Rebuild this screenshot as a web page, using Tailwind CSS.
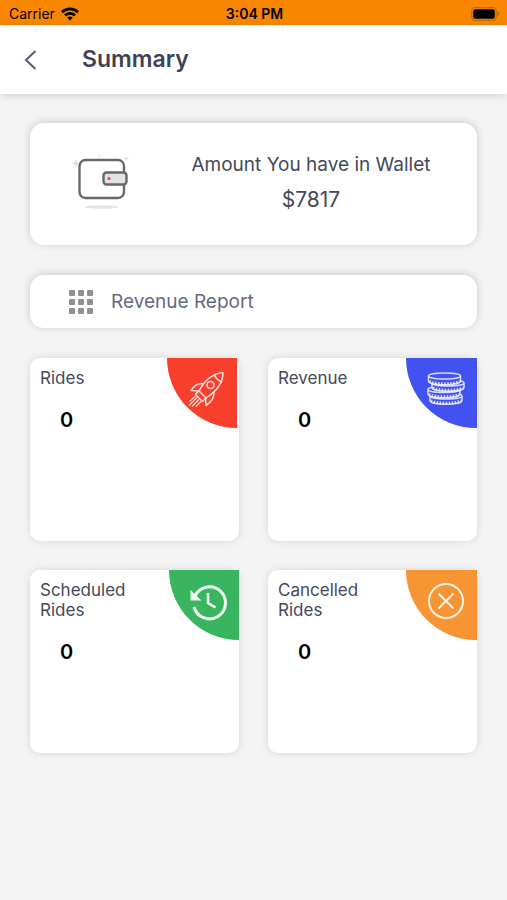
<!DOCTYPE html>
<html lang="en">
<head>
    <meta charset="UTF-8">
    <meta name="viewport" content="width=device-width, initial-scale=1">
    <title>Summary</title>
    <script src="https://cdn.jsdelivr.net/npm/@tailwindcss/browser@4"></script>
</head>
<body class="bg-[#f4f4f4] min-h-screen font-['Inter','Liberation_Sans',sans-serif] text-[#454958]">

    <!-- Status bar -->
    <div class="grid grid-cols-3 items-center h-[25px] pl-[9px] pr-[7px] pt-[2px] bg-[#f98600] text-black">
      <div class="flex items-center gap-[6px] text-[14px]">
        <span>Carrier</span>
        <svg class="w-[18px] h-[14px]" viewBox="0 0 18 14" fill="none" stroke="#000" stroke-width="2.6">
          <path d="M1 5.2a11.4 11.4 0 0 1 16 0"/>
          <path d="M4 8.4a7.2 7.2 0 0 1 10 0"/>
          <path d="M9 13.6L6.2 10.8a4 4 0 0 1 5.6 0z" fill="#000" stroke="none"/>
        </svg>
      </div>
      <p class="text-center text-[14px] font-semibold">3:04 PM</p>
      <svg class="justify-self-end w-[29px] h-[14px]" viewBox="0 0 29 14">
        <rect x=".7" y=".7" width="24.6" height="12.6" rx="3.6" fill="none" stroke="#c56a00" stroke-width="1.2"/>
        <rect x="2.2" y="2.2" width="21.6" height="9.6" rx="2" fill="#000"/>
        <path d="M26.4 4.6c2.6 1 2.6 3.8 0 4.8z" fill="#c56a00"/>
      </svg>
    </div>

    <header class="flex items-center h-[69px] pl-[18px] bg-white shadow-[0_2px_8px_rgba(0,0,0,0.13)]">
      <button type="button" aria-label="Back" class="w-[26px] h-[26px] mr-[38px]">
        <svg class="w-[26px] h-[26px]" viewBox="0 0 26 26" fill="none" stroke="#5a5b78" stroke-width="2">
          <path d="M17.500 4L8 13l9.500 9"/>
        </svg>
      </button>
      <h1 class="text-[23px] font-semibold text-[#3f4254]">Summary</h1>
    </header>

    <main class="px-[30px] pt-[29px] pb-8">

      <section class="flex h-[122px] mb-[30px] bg-white rounded-[14px] shadow-[0_-1px_9px_rgba(0,0,0,0.18)]">
        <div class="w-1/3 pt-[30px] pl-[42px]">
          <svg class="w-[58px] h-[58px]" viewBox="0 0 58 58" fill="none">
            <path d="M4 6l1.200 3.300 3.300 1.200-3.300 1.200-1.200 3.300-1.200-3.300-2.800-1.200 2.800-1.200z" fill="#dedede"/>
            <circle cx="27.500" cy="2.500" r="1" fill="#dcdcdc"/>
            <path d="M54.500 3l.8 1.800 1.800.8-1.800.8-.8 1.800-.8-1.800-1.800-.8 1.800-.8z" fill="#dedede"/>
            <ellipse cx="29.500" cy="54" rx="17" ry="1.800" fill="#e4e4e4"/>
            <rect x="7.500" y="7" width="44.500" height="38" rx="6" stroke="#686868" stroke-width="2.400"/>
            <rect x="31.500" y="19.500" width="23" height="12" rx="3" fill="#e2e2e2" stroke="#686868" stroke-width="2.400"/>
            <circle cx="37" cy="25.500" r="1.600" fill="#d4476e"/>
          </svg>
        </div>
        <div class="flex-1 pt-[29px] pr-[34px] text-center">
          <p class="text-[19px] leading-[26px]">Amount You have in Wallet</p>
          <p class="mt-[8px] text-[21px] leading-[28px]">$7817</p>
        </div>
      </section>

      <a href="#" class="flex items-center gap-[17px] h-[53px] mb-[30px] pl-[38px] bg-white rounded-[14px] shadow-[0_-1px_9px_rgba(0,0,0,0.18)] text-[19px] text-[#666982]">
        <svg class="w-[26px] h-[26px]" viewBox="0 0 26 26" fill="#909090">
          <rect x="1" y="1" width="6" height="6" rx="1"/>
          <rect x="10" y="1" width="6" height="6" rx="1"/>
          <rect x="19" y="1" width="6" height="6" rx="1"/>
          <rect x="1" y="10" width="6" height="6" rx="1"/>
          <rect x="10" y="10" width="6" height="6" rx="1"/>
          <rect x="19" y="10" width="6" height="6" rx="1"/>
          <rect x="1" y="19" width="6" height="6" rx="1"/>
          <rect x="10" y="19" width="6" height="6" rx="1"/>
          <rect x="19" y="19" width="6" height="6" rx="1"/>
        </svg>
        <span class="pt-[2px]">Revenue Report</span>
      </a>

      <div class="grid grid-cols-2 gap-[29px]">

        <div class="flex justify-between h-[183px] bg-white rounded-[10px] shadow-[0_0_8px_rgba(0,0,0,0.13)]">
          <div class="pl-[10px] pr-[30px] pt-[10px]">
            <h2 class="text-[17px] leading-[20px]">Rides</h2>
            <p class="mt-[18px] pl-[20px] text-[20px] leading-[28px] font-semibold text-black">0</p>
          </div>
          <div class="shrink-0 w-[70px] h-[70px] mr-[2px] bg-[#f73f2b] rounded-bl-[70px]">
            <svg class="w-[70px] h-[70px]" viewBox="0 0 70 70" fill="none" stroke="#fff" stroke-opacity=".8" stroke-width="1.600" stroke-linejoin="round">
              <path d="M56 14.500c-10 1-18 7-24 18.500l7 7c11-7 17-15 17-25.500z"/>
              <path d="M47 17c2 3.500 4 5.500 8 7.500"/>
              <circle cx="43.500" cy="27" r="3.500"/>
              <path d="M36 25.500c-6-.5-9 2-12 7l8 .5M47 34c0 6-2 9-8 13.500L38.500 40"/>
              <path d="M31.500 33l-3 3.500 7 7 3.500-3.500"/>
              <path d="M28.500 38l-6 5.500M30 39.500l-8 8M32 41.500l-7 7M34 43.500l-5 5" stroke-width="1.200"/>
            </svg>
          </div>
        </div>

        <div class="flex justify-between h-[183px] bg-white rounded-[10px] shadow-[0_0_8px_rgba(0,0,0,0.13)]">
          <div class="pl-[10px] pr-[30px] pt-[10px]">
            <h2 class="text-[17px] leading-[20px]">Revenue</h2>
            <p class="mt-[18px] pl-[20px] text-[20px] leading-[28px] font-semibold text-black">0</p>
          </div>
          <div class="shrink-0 w-[71px] h-[70px] bg-[#4252f0] rounded-bl-[70px]">
            <svg class="w-[71px] h-[70px]" viewBox="0 0 71 70" fill="#4252f0" stroke="#fff" stroke-opacity=".8" stroke-width="1.500">
              <path d="M24 38v4.500c0 5 32 5 32 0V38c0-4-32-4-32 0 0 4 32 4 32 0"/>
              <path d="M25 42.500c6 3.500 24 3.500 30 0" fill="none" stroke-width="2.600" stroke-dasharray="1.500 1.500"/>
              <path d="M22 31.500V36c0 5 32 5 32 0v-4.500c0-4-32-4-32 0 0 4 32 4 32 0"/>
              <path d="M23 36c6 3.500 24 3.500 30 0" fill="none" stroke-width="2.600" stroke-dasharray="1.500 1.500"/>
              <path d="M26 25v4.500c0 5 32 5 32 0V25c0-4-32-4-32 0 0 4 32 4 32 0"/>
              <path d="M27 29.500c6 3.500 24 3.500 30 0" fill="none" stroke-width="2.600" stroke-dasharray="1.500 1.500"/>
              <path d="M22.500 18v5c0 5 32 5 32 0v-5"/>
              <path d="M23.500 23c6 3.500 24 3.500 30 0" fill="none" stroke-width="2.600" stroke-dasharray="1.500 1.500"/>
              <ellipse cx="38.500" cy="18" rx="16" ry="3"/>
            </svg>
          </div>
        </div>

        <div class="flex justify-between h-[183px] bg-white rounded-[10px] shadow-[0_0_8px_rgba(0,0,0,0.13)]">
          <div class="pl-[10px] pr-[30px] pt-[10px]">
            <h2 class="text-[17px] leading-[20px]">Scheduled Rides</h2>
            <p class="mt-[18px] pl-[20px] text-[20px] leading-[28px] font-semibold text-black">0</p>
          </div>
          <div class="shrink-0 w-[70px] h-[70px] bg-[#38b55e] rounded-bl-[70px]">
            <svg class="w-[70px] h-[70px]" viewBox="0 0 70 70" fill="none" stroke="#effff3" stroke-width="3">
              <path d="M26 26a16 16 0 1 1-1 11"/>
              <path d="M21.500 20l11 10.500h-11z" fill="#effff3" stroke="none"/>
              <path d="M39 23v10l7.500 4.500" stroke-width="2.600"/>
            </svg>
          </div>
        </div>

        <div class="flex justify-between h-[183px] bg-white rounded-[10px] shadow-[0_0_8px_rgba(0,0,0,0.13)]">
          <div class="pl-[10px] pr-[30px] pt-[10px]">
            <h2 class="text-[17px] leading-[20px]">Cancelled Rides</h2>
            <p class="mt-[18px] pl-[20px] text-[20px] leading-[28px] font-semibold text-black">0</p>
          </div>
          <div class="shrink-0 w-[71px] h-[70px] bg-[#f79434] rounded-bl-[70px]">
            <svg class="w-[71px] h-[70px]" viewBox="0 0 71 70" fill="none" stroke="#fff4e4" stroke-width="2">
              <circle cx="40" cy="31" r="17"/>
              <path d="M32.500 23.500l15 15M47.500 23.500l-15 15"/>
            </svg>
          </div>
        </div>

      </div>
    </main>

</body>
</html>
